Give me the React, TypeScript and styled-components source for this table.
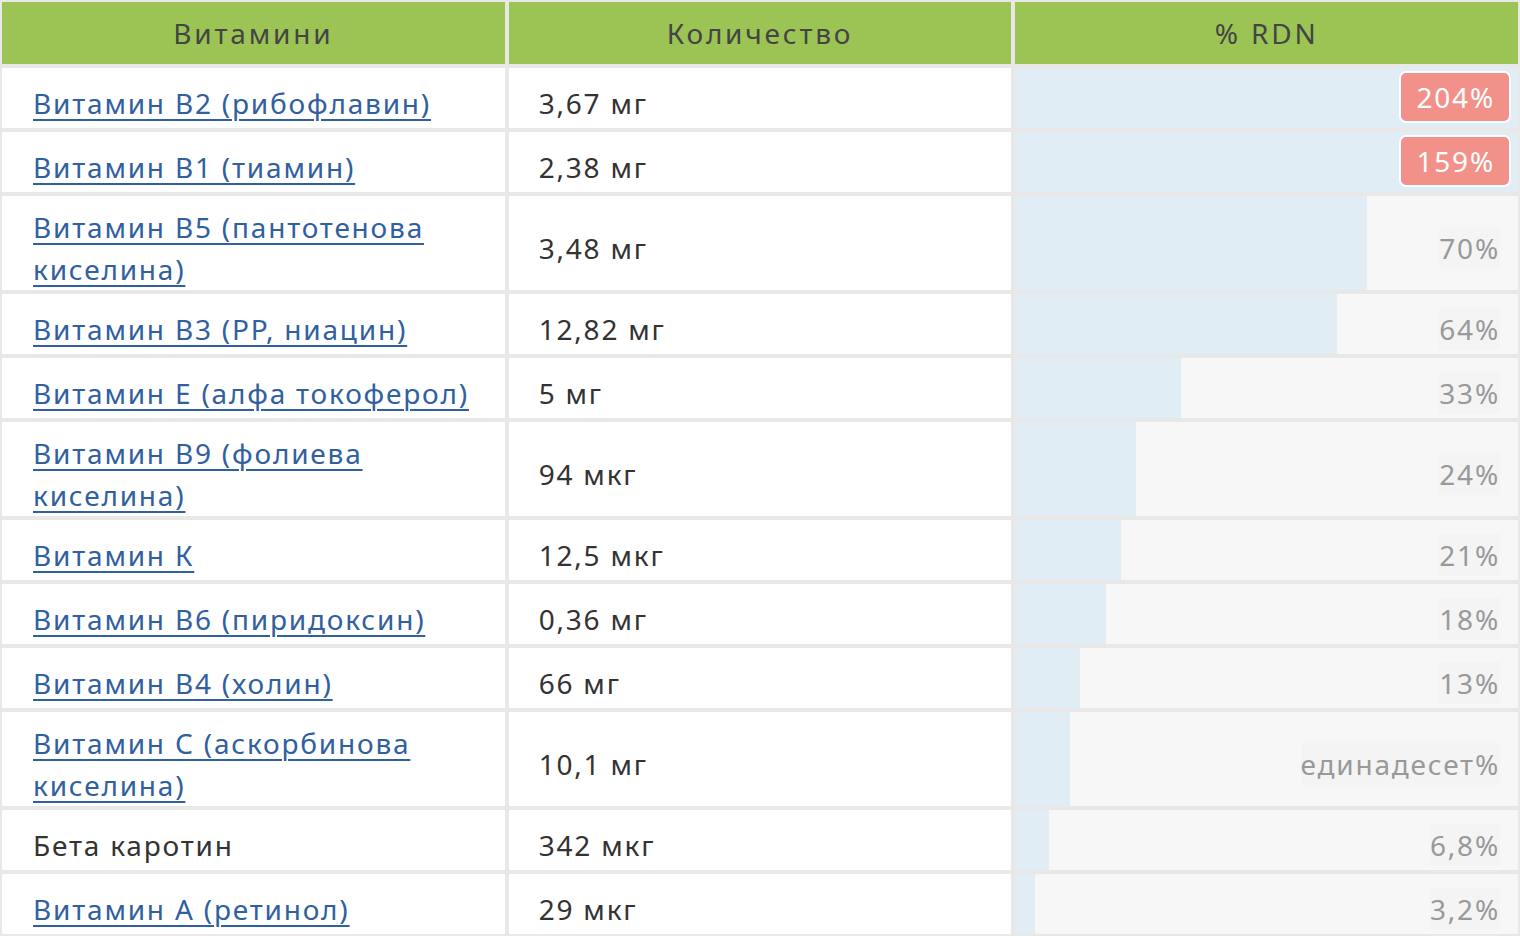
import React from "react";
import styled, { createGlobalStyle } from "styled-components";

const Global = createGlobalStyle`
  html, body { margin: 0; padding: 0; background: #ffffff; }
  body { font-family: "Noto Sans", "Open Sans", sans-serif; }
`;

const Table = styled.div`
  display: grid;
  grid-template-columns: 1fr 1fr 1fr;
  gap: 4px;
  padding: 2px;
  width: 1520px;
  box-sizing: border-box;
  background: #e8e8e8;
  font-family: "Noto Sans", "Open Sans", sans-serif;
  font-size: 28px;
  line-height: 42px;
  letter-spacing: 1.8px;
  color: #333333;
`;

const HeadCell = styled.div`
  height: 62px;
  background: #9bc455;
  color: #444444;
  display: flex;
  align-items: center;
  justify-content: center;
  font-size: 28px;
  letter-spacing: 2.8px;
`;

const Cell = styled.div`
  min-height: 50px;
  padding: 10px 20px 0 31px;
  background: #ffffff;
  display: flex;
  align-items: center;
`;

const AmountCell = styled(Cell)`
  padding-left: 30px;
`;

const NameLink = styled.a`
  color: #3060a0;
  text-decoration: underline;
  text-decoration-thickness: 2px;
  text-underline-offset: 5px;
`;

const PctCell = styled.div<{ $pct: number }>`
  min-height: 50px;
  padding: 10px 20px 0 20px;
  display: flex;
  align-items: center;
  justify-content: flex-end;
  background: linear-gradient(
    to right,
    #e0edf5 0,
    #e0edf5 ${(p) => Math.min(p.$pct, 100)}%,
    #f8f7f8 ${(p) => Math.min(p.$pct, 100)}%,
    #f8f7f8 100%
  );
`;

const PctText = styled.span`
  color: #999999;
  background: #f5f4f5;
  margin-right: -2px;
`;

const Badge = styled.span`
  color: #ffffff;
  background: #f2918a;
  border: 2px solid #ffffff;
  border-radius: 7px;
  padding: 3px 14px 3px 15px;
  margin: -13px -13px 0 0;
`;

type Row = { name: string; link: boolean; amount: string; pct: number; label: string };

const rows: Row[] = [
  { name: "Витамин В2 (рибофлавин)", link: true, amount: "3,67 мг", pct: 204, label: "204%" },
  { name: "Витамин В1 (тиамин)", link: true, amount: "2,38 мг", pct: 159, label: "159%" },
  { name: "Витамин В5 (пантотенова киселина)", link: true, amount: "3,48 мг", pct: 70, label: "70%" },
  { name: "Витамин В3 (PP, ниацин)", link: true, amount: "12,82 мг", pct: 64, label: "64%" },
  { name: "Витамин Е (алфа токоферол)", link: true, amount: "5 мг", pct: 33, label: "33%" },
  { name: "Витамин В9 (фолиева киселина)", link: true, amount: "94 мкг", pct: 24, label: "24%" },
  { name: "Витамин К", link: true, amount: "12,5 мкг", pct: 21, label: "21%" },
  { name: "Витамин В6 (пиридоксин)", link: true, amount: "0,36 мг", pct: 18, label: "18%" },
  { name: "Витамин В4 (холин)", link: true, amount: "66 мг", pct: 13, label: "13%" },
  { name: "Витамин С (аскорбинова киселина)", link: true, amount: "10,1 мг", pct: 11, label: "единадесет%" },
  { name: "Бета каротин", link: false, amount: "342 мкг", pct: 6.8, label: "6,8%" },
  { name: "Витамин А (ретинол)", link: true, amount: "29 мкг", pct: 4, label: "3,2%" },
];

export default function App() {
  return (
    <>
      <Global />
      <Table lang="bg">
        <HeadCell>Витамини</HeadCell>
        <HeadCell>Количество</HeadCell>
        <HeadCell>% RDN</HeadCell>
        {rows.map((r) => (
          <React.Fragment key={r.name}>
            <Cell>{r.link ? <NameLink href="#">{r.name}</NameLink> : <span>{r.name}</span>}</Cell>
            <AmountCell>{r.amount}</AmountCell>
            <PctCell $pct={r.pct}>
              {r.pct >= 100 ? <Badge>{r.label}</Badge> : <PctText>{r.label}</PctText>}
            </PctCell>
          </React.Fragment>
        ))}
      </Table>
    </>
  );
}
